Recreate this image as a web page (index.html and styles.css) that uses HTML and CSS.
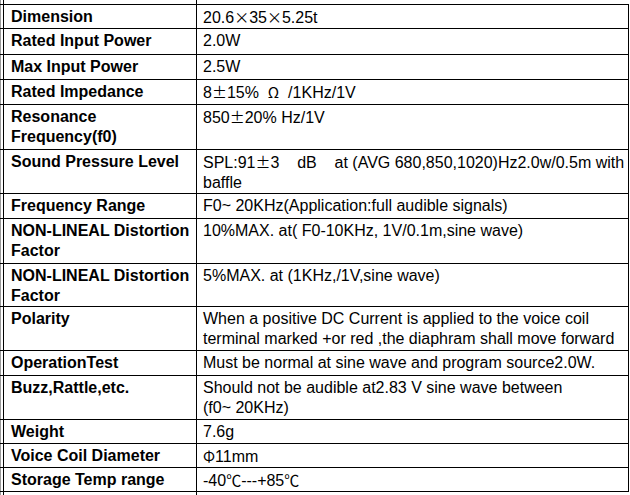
FILE: index.html
```html
<!DOCTYPE html>
<html>
<head>
<meta charset="utf-8">
<link rel="stylesheet" href="styles.css">
</head>
<body>
<table class="spec">
  <colgroup><col class="c-gap"><col class="c-label"><col class="c-value"></colgroup>
  <tr class="stub"><td class="gap"></td><td class="stub-l"></td><td class="stub-v"></td></tr>
  <tr class="h24"><td class="gap"></td><th>Dimension</th><td>20.6<span class="cjk">×</span>35<span class="cjk">×</span>5.25t</td></tr>
  <tr class="h26"><td class="gap"></td><th>Rated Input Power</th><td>2.0W</td></tr>
  <tr class="h25"><td class="gap"></td><th>Max Input Power</th><td>2.5W</td></tr>
  <tr class="h25"><td class="gap"></td><th>Rated Impedance</th><td>8<span class="cjk">±</span>15%&nbsp; <span class="cjk">Ω</span>&nbsp; /1KHz/1V</td></tr>
  <tr class="h45"><td class="gap"></td><th>Resonance<br>Frequency(f0)</th><td>850<span class="cjk">±</span>20% Hz/1V</td></tr>
  <tr class="h44"><td class="gap"></td><th>Sound Pressure Level</th><td>SPL:91<span class="cjk">±</span>3&nbsp;&nbsp;&nbsp; dB&nbsp;&nbsp;&nbsp; at (AVG 680,850,1020)Hz2.0w/0.5m with<br>baffle</td></tr>
  <tr class="h25"><td class="gap"></td><th>Frequency Range</th><td>F0~ 20KHz(Application:full audible signals)</td></tr>
  <tr class="h45"><td class="gap"></td><th>NON-LINEAL Distortion<br>Factor</th><td>10%MAX. at( F0-10KHz, 1V/0.1m,sine wave)</td></tr>
  <tr class="h43"><td class="gap"></td><th>NON-LINEAL Distortion<br>Factor</th><td>5%MAX. at (1KHz,/1V,sine wave)</td></tr>
  <tr class="h44"><td class="gap"></td><th>Polarity</th><td>When a positive DC Current is applied to the voice coil<br>terminal marked +or red ,the diaphram shall move forward</td></tr>
  <tr class="h25"><td class="gap"></td><th>OperationTest</th><td>Must be normal at sine wave and program source2.0W.</td></tr>
  <tr class="h44"><td class="gap"></td><th>Buzz,Rattle,etc.</th><td>Should not be audible at2.83 V sine wave between<br>(f0~ 20KHz)</td></tr>
  <tr class="h24"><td class="gap"></td><th>Weight</th><td>7.6g</td></tr>
  <tr class="h24"><td class="gap"></td><th>Voice Coil Diameter</th><td><span class="cjk">Φ</span>11mm</td></tr>
  <tr class="h24"><td class="gap"></td><th>Storage Temp range</th><td>-40<span class="cjk">℃</span>---+85<span class="cjk">℃</span></td></tr>
  <tr class="stub-b"><td class="gap"></td><td class="stub-l"></td><td class="stub-v"></td></tr>
</table>
</body>
</html>
```
FILE: styles.css
```css
html, body {
  margin: 0;
  padding: 0;
  background: #fff;
}
.spec {
  border-collapse: collapse;
  table-layout: fixed;
  width: 628px;
  font-family: "Liberation Sans", Arial, sans-serif;
  font-size: 16px;
  color: #000;
}
.c-gap { width: 3px; }
.c-label { width: 193px; }
.c-value { width: 432px; }
.spec th, .spec td {
  border: 1px solid #000;
  padding: 2px 6px 0 7px;
  line-height: 20px;
  vertical-align: top;
  text-align: left;
  white-space: nowrap;
  overflow: hidden;
}
.spec th { font-weight: bold; }
.spec td { font-weight: normal; padding-left: 6px; }
.spec td.gap {
  padding: 0;
  border-left: 1px solid #9a9a9a;
  border-right: 1px solid #000;
}
.cjk {
  font-family: "Noto Sans CJK SC", sans-serif;
  font-size: 15px;
}
.stub td, .stub-b td {
  height: 4px;
  padding: 0;
  line-height: 0;
  font-size: 0;
}
.stub td { border-top: none; }
.stub-b td { border-bottom: none; height: 3px; }
.stub td.stub-v, .stub-b td.stub-v { border-right: none; }
.h24 th, .h24 td { height: 21px; }
.h25 th, .h25 td { height: 22px; }
.h26 th, .h26 td { height: 23px; }
.h43 th, .h43 td { height: 40px; }
.h44 th, .h44 td { height: 41px; }
.h45 th, .h45 td { height: 42px; }
.spec td.gap { height: auto; }
```
